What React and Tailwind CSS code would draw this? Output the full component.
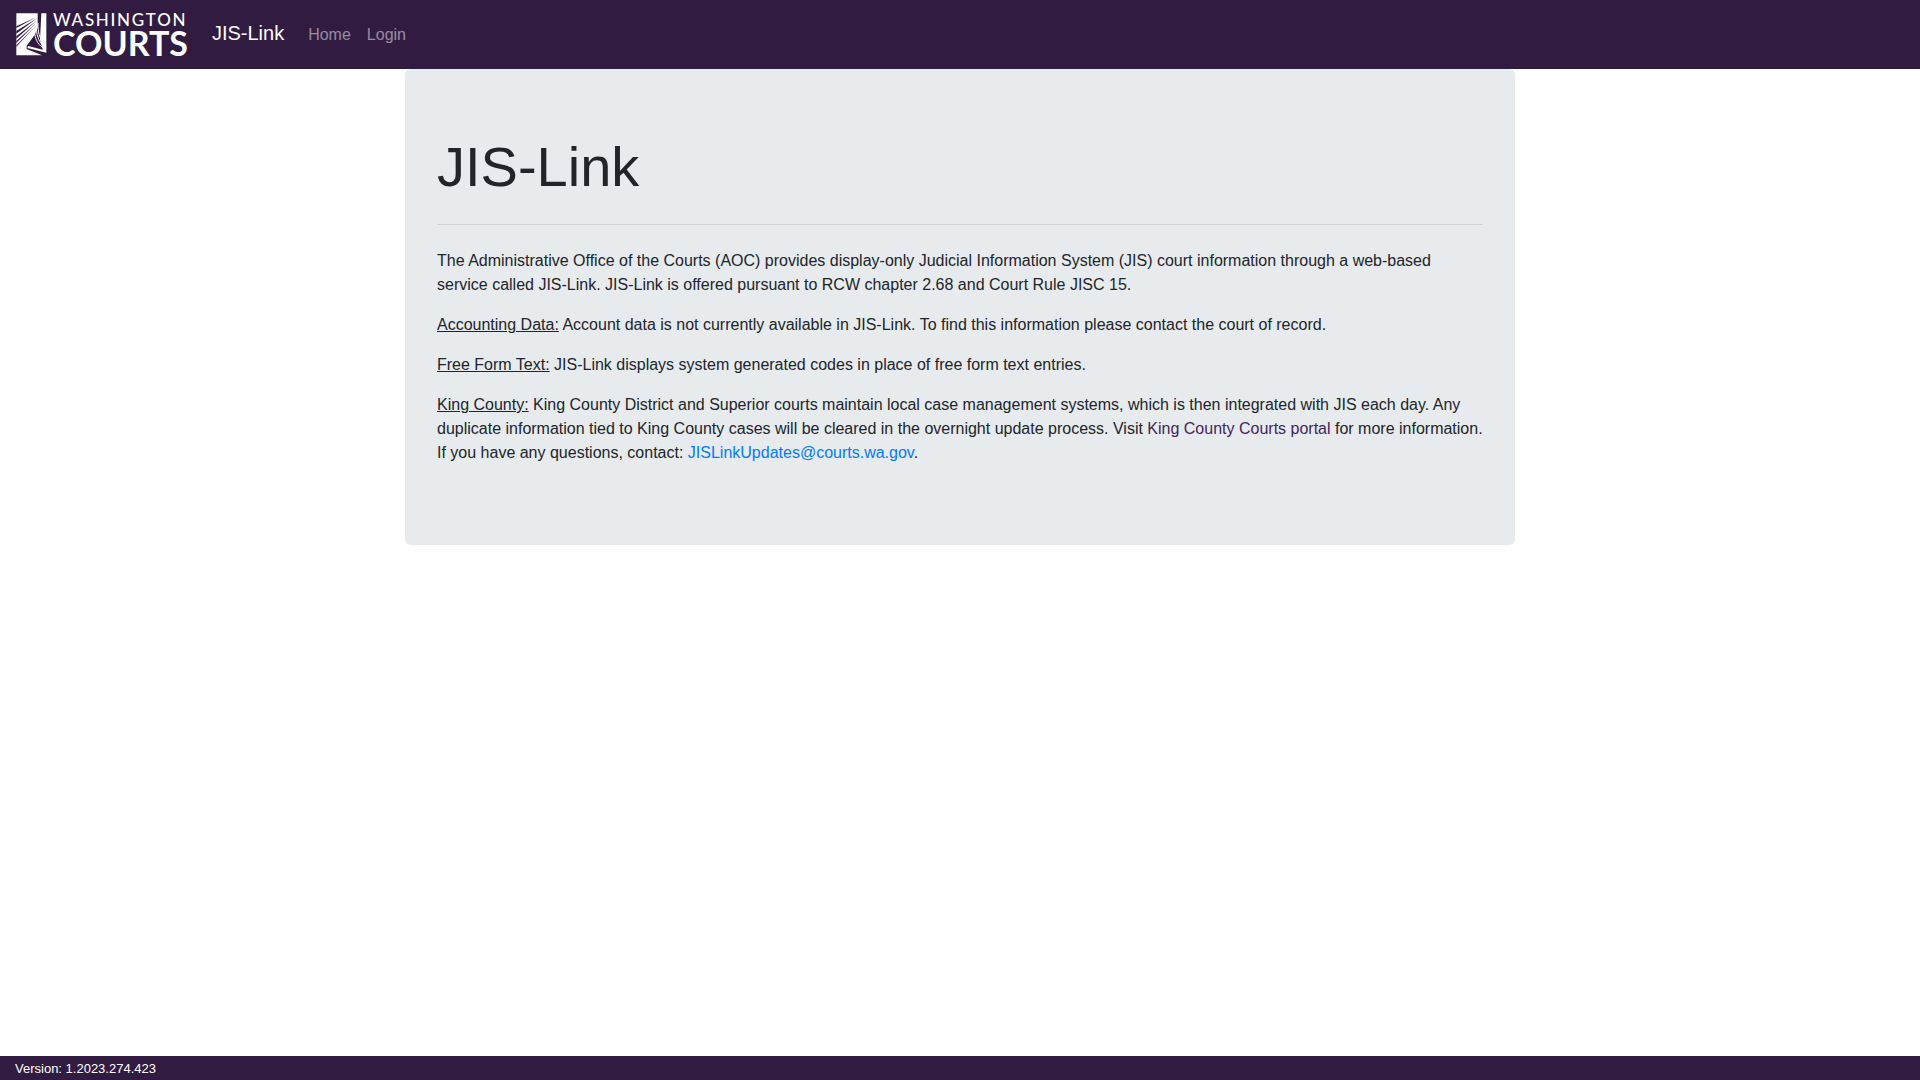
const navLinks = [
  { label: "Home", href: "#home" },
  { label: "Login", href: "#login" },
];

function CourtsMark() {
  return (
    <svg viewBox="0 0 93 129" className="h-[43px] w-[31px]" aria-hidden="true">
      {/* page and pillar */}
      <path fill="#fff" d="M1 1H65V44L56 66 32 98V108L78 127H1Z" />
      <path fill="#fff" d="M76 1H91V119L34 105 37 99 80 110 72 80Z" />
      {/* rays */}
      <g fill="#321b41">
        <path d="M62 12 1 40V45Z" />
        <path d="M64 15 1 54V62Z" />
        <path d="M63 22 1 70V77Z" />
        <path d="M62 29 1 84V90Z" />
        <path d="M60 38 1 97V101Z" />
      </g>
      {/* curtain folds */}
      <path fill="#321b41" opacity=".75" d="M57 64 38 97 80 108 72 90Z" />
      <g fill="none" stroke="#fff">
        <path d="M61 40C61 62 66 84 82 98" strokeWidth="3" />
        <path d="M56 58C57 76 64 92 80 104" strokeWidth="3" />
        <path d="M66 30C65 56 70 76 84 90" strokeWidth="3" />
      </g>
    </svg>
  );
}

function Navbar() {
  return (
    <nav className="flex items-center bg-[#321b41] px-4 h-[69px]">
      <a href="#home" className="flex items-center gap-[6px] text-white">
        <CourtsMark />
        <span className="flex flex-col font-[Lato,sans-serif]">
          <span className="text-[17px] leading-[16px] font-medium tracking-widest">
            WASHINGTON
          </span>
          <span className="text-[34px] leading-[30px] font-bold">COURTS</span>
        </span>
      </a>

      <div className="ml-6 flex items-baseline pb-1">
        <a href="#home" className="mr-4 text-[20px] leading-[30px] text-white">
          JIS-Link
        </a>
        {navLinks.map((link) => (
          <a
            key={link.label}
            href={link.href}
            className="px-2 text-[16px] leading-[24px] text-white/50 hover:text-white/75"
          >
            {link.label}
          </a>
        ))}
      </div>
    </nav>
  );
}

export default function App() {
  return (
    <div className="flex min-h-screen flex-col bg-white font-['Liberation_Sans',Arial,sans-serif] text-[16px] leading-[24px] text-[#212529]">
      <Navbar />

      <main className="mx-auto w-full max-w-[1110px] rounded-md bg-[#e7ebee] px-8 py-16">
        <h1 className="text-[56px] leading-[67px]">JIS-Link</h1>
        <hr className="my-6 border-black/10" />

        <p className="mb-4">
          The Administrative Office of the Courts (AOC) provides display-only
          Judicial Information System (JIS) court information through a
          web-based service called JIS-Link. JIS-Link is offered pursuant to RCW
          chapter 2.68 and Court Rule JISC 15.
        </p>
        <p className="mb-4">
          <u>Accounting Data:</u> Account data is not currently available in
          JIS-Link. To find this information please contact the court of record.
        </p>
        <p className="mb-4">
          <u>Free Form Text:</u> JIS-Link displays system generated codes in
          place of free form text entries.
        </p>
        <p className="mb-4">
          <u>King County:</u> King County District and Superior courts maintain
          local case management systems, which is then integrated with JIS each
          day. Any duplicate information tied to King County cases will be
          cleared in the overnight update process. Visit{" "}
          <a href="#portal" className="text-[#451f5c] hover:underline">
            King County Courts portal
          </a>{" "}
          for more information.
          <br />
          If you have any questions, contact:{" "}
          <a
            href="mailto:JISLinkUpdates@courts.wa.gov"
            className="text-[#007bff] hover:underline"
          >
            JISLinkUpdates@courts.wa.gov
          </a>
          .
        </p>
      </main>

      <footer className="mt-auto bg-[#321b41] px-[15px] pt-0.5 text-[13px] leading-[22px] text-white">
        Version: 1.2023.274.423
      </footer>
    </div>
  );
}
